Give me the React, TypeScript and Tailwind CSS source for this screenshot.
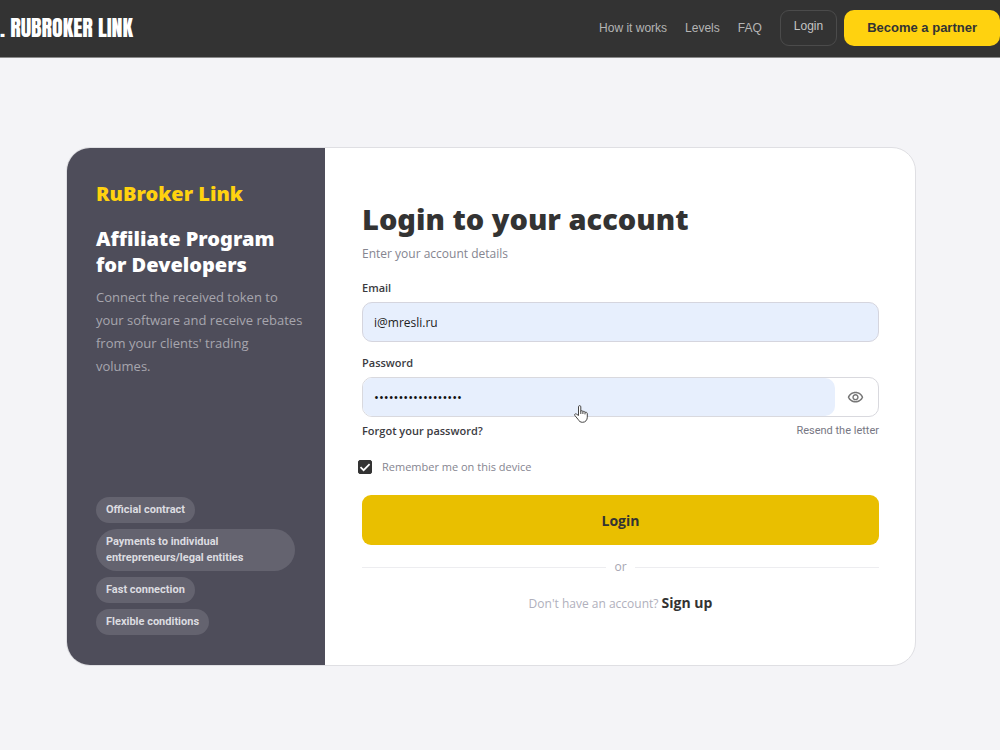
import React, { useState } from "react";
import { MdOutlineVisibility } from "react-icons/md";

const navLinks = ["How it works", "Levels", "FAQ"];

const perks = [
  "Official contract",
  "Payments to individual entrepreneurs/legal entities",
  "Fast connection",
  "Flexible conditions",
];

function Header() {
  return (
    <header className="flex h-[58px] items-center justify-between border-b border-[#8a8a8a] bg-[#333333] pb-[2px] font-['Liberation_Sans',sans-serif]">
      <a
        href="#"
        className="whitespace-pre font-['Anton','Impact','Liberation_Sans',sans-serif] text-[22px] leading-8 font-normal text-white"
      >
        . RUBROKER LINK
      </a>
      <div className="flex items-center">
        <nav className="mr-[18px] flex gap-[18px]">
          {navLinks.map((label) => (
            <a key={label} href="#" className="text-[12px] text-[#b5b5b5]">
              {label}
            </a>
          ))}
        </nav>
        <button className="mr-[7px] h-9 rounded-[9px] border border-[#4b4b4b] px-[13px] pb-[3px] text-[12px] text-[#c4c4c4]">
          Login
        </button>
        <button className="h-9 rounded-[10px] bg-[#ffd20f] px-[23px] text-[13px] font-bold text-[#333333]">
          Become a partner
        </button>
      </div>
    </header>
  );
}

function PromoPanel() {
  return (
    <aside className="flex flex-col justify-between bg-[#4e4d5a] py-[30px] pr-[30px] pl-[29px]">
      <div>
        <div className="font-['Noto_Sans',sans-serif] text-[20px] leading-8 font-black text-[#ffd20f]">
          RuBroker Link
        </div>
        <h2 className="mt-4 font-['Noto_Sans',sans-serif] text-[20px] leading-[26px] font-black text-white">
          Affiliate Program for Developers
        </h2>
        <p className="mt-2 -mr-3 text-[13px] leading-[23px] text-[#a7a6ae]">
          Connect the received token to
          <br />
          your software and receive rebates
          <br />
          from your clients' trading
          <br />
          volumes.
        </p>
      </div>
      <ul className="flex flex-col items-start gap-[6px]">
        {perks.map((perk) => (
          <li
            key={perk}
            className="rounded-[21px] bg-[#64636f] px-[10px] py-[5px] font-['Roboto',sans-serif] text-[11px] leading-4 font-bold text-[#dcdce0]"
          >
            {perk}
          </li>
        ))}
      </ul>
    </aside>
  );
}

function LoginForm() {
  const [visible, setVisible] = useState(false);

  return (
    <form className="flex flex-col pt-[53px] pr-9 pb-[51px] pl-[37px]" onSubmit={(e) => e.preventDefault()}>
      <h1 className="font-['Noto_Sans',sans-serif] text-[29px] leading-9 font-black text-[#333333]">
        Login to your account
      </h1>
      <p className="mt-[7px] text-[12px] leading-5 text-[#858590]">Enter your account details</p>

      <label htmlFor="email" className="mt-4 text-[11px] leading-4 font-semibold text-[#3b3b3f]">
        Email
      </label>
      <input
        id="email"
        type="email"
        defaultValue="i@mresli.ru"
        className="mt-[6px] h-10 rounded-[10px] border border-[#d5d5de] bg-[#e7effd] px-[11px] text-[12px] text-[#222222] outline-none"
      />

      <label htmlFor="password" className="mt-[13px] text-[11px] leading-4 font-semibold text-[#3b3b3f]">
        Password
      </label>
      <div className="mt-[6px] flex h-10 overflow-hidden rounded-[10px] border border-[#d9d9de]">
        <input
          id="password"
          type={visible ? "text" : "password"}
          defaultValue="partner-access-123"
          className="min-w-0 flex-1 rounded-r-[10px] bg-[#e7effd] px-[11px] pt-[2px] text-[13px] text-[#111111] outline-none"
        />
        <button
          type="button"
          aria-label="Show password"
          onClick={() => setVisible(!visible)}
          className="flex w-[43px] items-center justify-center pr-[2px] text-[#777777]"
        >
          <MdOutlineVisibility size={17} />
        </button>
      </div>

      <div className="mt-[6px] flex justify-between text-[11px] leading-4">
        <a href="#" className="font-semibold text-[#3b3b3f]">
          Forgot your password?
        </a>
        <a href="#" className="font-['Roboto',sans-serif] text-[#777783]">
          Resend the letter
        </a>
      </div>

      <label className="mt-5 -ml-1 flex items-center gap-[10px] self-start text-[11px] leading-4 text-[#858590]">
        <span className="grid place-items-center">
          <input
            type="checkbox"
            defaultChecked
            className="peer col-start-1 row-start-1 h-[14px] w-[14px] appearance-none rounded-[2px] border border-[#333333] checked:bg-[#333333]"
          />
          <svg
            viewBox="0 0 14 14"
            className="pointer-events-none invisible col-start-1 row-start-1 h-[14px] w-[14px] peer-checked:visible"
            fill="none"
            stroke="white"
            strokeWidth="1.7"
          >
            <path d="M2.5 7.2 5.6 10.2 11.6 4.2" />
          </svg>
        </span>
        Remember me on this device
      </label>

      <button
        type="submit"
        className="mt-5 h-[50px] rounded-[9px] bg-[#e9bf00] text-[14px] font-bold text-[#333333]"
      >
        Login
      </button>

      <div className="mt-[14px] flex items-center gap-2 text-[12px] leading-4 text-[#a6a6b2]">
        <span className="h-px flex-1 bg-[#ededf0]" />
        or
        <span className="h-px flex-1 bg-[#ededf0]" />
      </div>

      <p className="mt-[18px] text-center text-[12px] leading-5 text-[#b0b0bc]">
        Don't have an account?{" "}
        <a href="#" className="text-[14px] font-bold text-[#333333]">
          Sign up
        </a>
      </p>
    </form>
  );
}

function HandCursor() {
  return (
    <svg
      viewBox="0 0 14 18"
      className="pointer-events-none absolute top-[405px] left-[574px] h-[18px] w-[14px]"
      fill="white"
      stroke="#444444"
      strokeWidth="1"
      strokeLinejoin="round"
    >
      <path d="M4.5 10.5V1.8C4.5.2 6.8.2 6.8 1.8V6.2C7.2 5.3 8.9 5.5 8.9 6.7 9.5 6 11 6.3 11 7.5 11.8 6.9 13.3 7.3 13.3 8.7V12.2C13.3 15 11.5 17.3 8.6 17.3 6.3 17.3 5.2 16.3 4 14.3L.8 10.4C0 9.2 1.6 8.3 2.6 9.2Z" />
      <path d="M6.8 6V9M8.9 6.8V9M11 7.5V9.4" fill="none" />
    </svg>
  );
}

export default function App() {
  return (
    <div className="relative min-h-screen bg-[#f4f4f7] font-['Open_Sans',sans-serif]">
      <Header />
      <main className="pt-[89px] pr-[84px] pb-[84px] pl-[66px]">
        <div className="grid grid-cols-[258px_1fr] overflow-hidden rounded-[24px] border border-[#dfdfe3] bg-white">
          <PromoPanel />
          <LoginForm />
        </div>
      </main>
      <HandCursor />
    </div>
  );
}
